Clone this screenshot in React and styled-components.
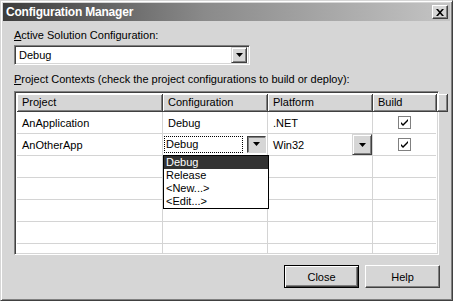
import React from "react";
import styled, { createGlobalStyle } from "styled-components";

const GlobalStyle = createGlobalStyle`
  html, body {
    margin: 0;
    padding: 0;
    background: #d6d6d6;
  }
  * {
    box-sizing: border-box;
  }
`;

const FONT = `"Liberation Sans", Arial, sans-serif`;

const Window = styled.div`
  width: 453px;
  height: 301px;
  background: #d6d6d6;
  border: 1px solid #404040;
  border-top-color: #d6d6d6;
  border-left-color: #d6d6d6;
  box-shadow: inset 1px 1px 0 #ffffff, inset -1px -1px 0 #808080;
  padding: 2px;
  font-family: ${FONT};
  font-size: 11px;
  color: #000;
  display: flex;
  flex-direction: column;
  position: relative;
`;

const TitleBar = styled.div`
  height: 18px;
  display: flex;
  align-items: center;
  justify-content: space-between;
  padding: 0 2px 0 3px;
  background: linear-gradient(to right, #3c3c3c 0%, #8a8a8a 45%, #c4c4c4 100%);
`;

const Title = styled.span`
  color: #fff;
  font-weight: bold;
  font-size: 12px;
  letter-spacing: -0.2px;
`;

const CloseBox = styled.div`
  width: 16px;
  height: 14px;
  background: #d6d6d6;
  border: 1px solid;
  border-color: #fff #404040 #404040 #fff;
  box-shadow: inset -1px -1px 0 #808080;
  display: flex;
  align-items: center;
  justify-content: center;
`;

const Body = styled.div`
  flex: 1;
  display: flex;
  flex-direction: column;
  padding: 8px 10px 0 11px;
`;

const Label = styled.div`
  height: 13px;
  line-height: 13px;
  margin-bottom: ${(p) => p.$gap || 4}px;
  u {
    text-decoration: underline;
  }
`;

const Combo = styled.div`
  width: 236px;
  height: 20px;
  background: #fff;
  border: 1px solid;
  border-color: #808080 #fff #fff #808080;
  box-shadow: inset 1px 1px 0 #404040, inset -1px -1px 0 #d6d6d6;
  display: flex;
  align-items: center;
  padding: 2px 2px 2px 4px;
  margin-bottom: 8px;
`;

const ComboText = styled.span`
  flex: 1;
`;

const ArrowButton = styled.div`
  width: ${(p) => p.$w || 16}px;
  height: ${(p) => p.$h || 16}px;
  flex-shrink: 0;
  background: #d6d6d6;
  border: 1px solid;
  border-color: ${(p) =>
    p.$pressed ? "#404040 #d6d6d6 #d6d6d6 #404040" : "#d6d6d6 #404040 #404040 #d6d6d6"};
  box-shadow: ${(p) =>
    p.$pressed
      ? "inset 1px 1px 0 #808080"
      : "inset 1px 1px 0 #fff, inset -1px -1px 0 #808080"};
  display: flex;
  align-items: center;
  justify-content: center;
`;

const Arrow = () => (
  <svg width="7" height="4" viewBox="0 0 7 4">
    <path d="M0 0h7L3.5 4z" fill="#000" />
  </svg>
);

const GridFrame = styled.div`
  width: 425px;
  height: 164px;
  border: 1px solid;
  border-color: #808080 #fff #fff #808080;
  box-shadow: inset 1px 1px 0 #404040, inset -1px -1px 0 #d6d6d6;
  background: #fff;
  padding: 2px;
  position: relative;
`;

const Table = styled.div`
  width: 100%;
  height: 100%;
  position: relative;
`;

const COLS = "146px 105px 105px 64px 1fr";

const HeaderRow = styled.div`
  display: grid;
  grid-template-columns: ${COLS};
  height: 18px;
  background: #d6d6d6;
`;

const HeaderCell = styled.div`
  border-right: 1px solid #404040;
  border-bottom: 1px solid #404040;
  box-shadow: inset 1px 1px 0 #fff, inset -1px -1px 0 #808080;
  padding: 0 5px;
  line-height: 16px;
  white-space: nowrap;
  overflow: hidden;
`;

const Rows = styled.div`
  height: 142px;
  overflow: hidden;
  position: relative;
`;

const Row = styled.div`
  display: grid;
  grid-template-columns: ${COLS};
  height: 22px;
`;

const Cell = styled.div`
  border-right: 1px solid #d4d4d4;
  border-bottom: 1px solid #d4d4d4;
  display: flex;
  align-items: center;
  justify-content: ${(p) => (p.$center ? "center" : "flex-start")};
  padding: ${(p) => (p.$center || p.$flush ? "0" : "0 0 0 5px")};
  position: relative;
`;

const Editor = styled.div`
  display: flex;
  align-items: center;
  width: 100%;
  height: 100%;
  padding: 1px 1px 2px 1px;
  gap: 4px;
`;

const FocusBox = styled.div`
  flex: 1;
  height: 17px;
  border: 1px dotted #000;
  padding-left: 1px;
  line-height: 15px;
`;

const PlatformValue = styled.div`
  display: flex;
  align-items: center;
  justify-content: space-between;
  width: 100%;
  height: 100%;
  padding: 0;
`;

const Check = styled.div`
  width: 13px;
  height: 13px;
  border: 1px solid #808080;
  background: #fff;
  display: flex;
  align-items: center;
  justify-content: center;
`;

const DropList = styled.div`
  position: absolute;
  left: 146px;
  top: 61px;
  width: 106px;
  background: #fff;
  border: 1px solid #000;
  z-index: 5;
`;

const DropItem = styled.div`
  height: 13px;
  line-height: 13px;
  padding-left: 2px;
  background: ${(p) => (p.$active ? "#333333" : "#fff")};
  color: ${(p) => (p.$active ? "#fff" : "#000")};
`;

const Footer = styled.div`
  display: flex;
  justify-content: flex-end;
  gap: 6px;
  padding: 10px 0 0 0;
`;

const Button = styled.button`
  width: 75px;
  height: 23px;
  font-family: ${FONT};
  font-size: 11px;
  color: #000;
  background: #d6d6d6;
  border: 1px solid;
  border-color: ${(p) => (p.$default ? "#000" : "#fff #404040 #404040 #fff")};
  box-shadow: ${(p) =>
    p.$default
      ? "inset 1px 1px 0 #fff, inset -1px -1px 0 #404040, inset -2px -2px 0 #808080"
      : "inset -1px -1px 0 #808080"};
  padding: 0;
`;

const CheckMark = () => (
  <svg width="9" height="9" viewBox="0 0 9 9">
    <path d="M1 4l2 2 5-5v2l-5 5-2-2z" fill="#000" />
  </svg>
);

const projects = [
  { name: "AnApplication", config: "Debug", platform: ".NET", build: true },
  { name: "AnOtherApp", config: "Debug", platform: "Win32", build: true, editing: true },
];

const options = ["Debug", "Release", "<New...>", "<Edit...>"];

export default function App() {
  return (
    <>
      <GlobalStyle />
      <Window>
        <TitleBar>
          <Title>Configuration Manager</Title>
          <CloseBox>
            <svg width="8" height="7" viewBox="0 0 8 7">
              <path d="M0 0h2l2 2.2L6 0h2L5 3.5 8 7H6L4 4.8 2 7H0l3-3.5z" fill="#000" />
            </svg>
          </CloseBox>
        </TitleBar>
        <Body>
          <Label $gap={3}>
            <u>A</u>ctive Solution Configuration:
          </Label>
          <Combo>
            <ComboText>Debug</ComboText>
            <ArrowButton>
              <Arrow />
            </ArrowButton>
          </Combo>
          <Label $gap={5}>
            <u>P</u>roject Contexts (check the project configurations to build or deploy):
          </Label>
          <GridFrame>
            <Table>
              <HeaderRow>
                <HeaderCell>Project</HeaderCell>
                <HeaderCell>Configuration</HeaderCell>
                <HeaderCell>Platform</HeaderCell>
                <HeaderCell>Build</HeaderCell>
                <HeaderCell />
              </HeaderRow>
              <Rows>
                {projects.map((p) => (
                  <Row key={p.name}>
                    <Cell>{p.name}</Cell>
                    <Cell $flush={p.editing}>
                      {p.editing ? (
                        <Editor>
                          <FocusBox>{p.config}</FocusBox>
                          <ArrowButton $w={19} $h={17} $pressed>
                            <Arrow />
                          </ArrowButton>
                        </Editor>
                      ) : (
                        p.config
                      )}
                    </Cell>
                    <Cell>
                      {p.editing ? (
                        <PlatformValue>
                          <span>{p.platform}</span>
                          <ArrowButton $w={20} $h={21}>
                            <Arrow />
                          </ArrowButton>
                        </PlatformValue>
                      ) : (
                        p.platform
                      )}
                    </Cell>
                    <Cell $center>
                      <Check>{p.build && <CheckMark />}</Check>
                    </Cell>
                    <Cell />
                  </Row>
                ))}
                {[0, 1, 2, 3, 4].map((i) => (
                  <Row key={i}>
                    <Cell />
                    <Cell />
                    <Cell />
                    <Cell />
                    <Cell />
                  </Row>
                ))}
              </Rows>
              <DropList>
                {options.map((o, i) => (
                  <DropItem key={o} $active={i === 0}>
                    {o}
                  </DropItem>
                ))}
              </DropList>
            </Table>
          </GridFrame>
          <Footer>
            <Button $default>Close</Button>
            <Button>Help</Button>
          </Footer>
        </Body>
      </Window>
    </>
  );
}
